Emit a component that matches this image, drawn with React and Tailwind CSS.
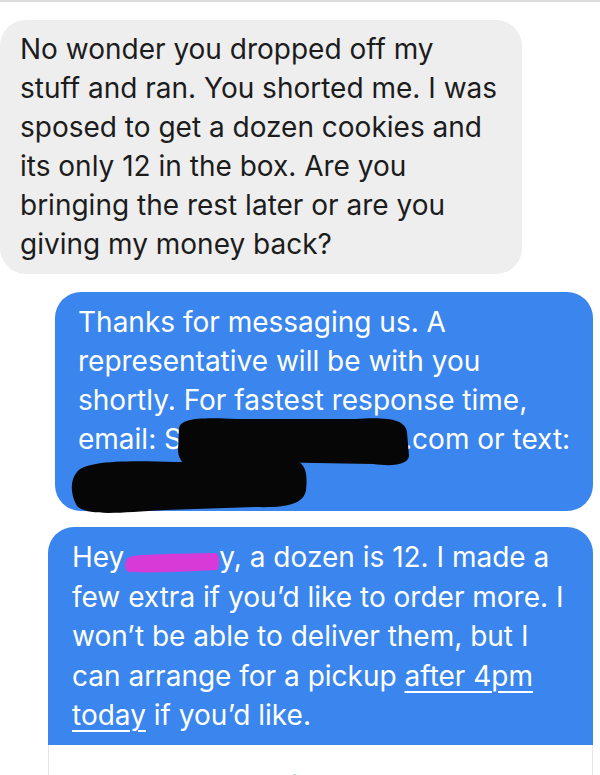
import React from "react";

const font = { fontFamily: 'Inter, "Liberation Sans", Arial, sans-serif' };

export default function App() {
  return (
    <div className="w-[600px] h-[775px] overflow-hidden bg-white" style={font}>
      <div className="h-[2px] bg-[#dcdcdc]" />
      <div className="pt-[18px] flex flex-col">
        {/* incoming gray bubble */}
        <div className="w-[522px] rounded-[26px] bg-[#eeeeee] pl-[20px] pr-[10px] py-[10px] text-[28px] leading-[39px] text-[#1c1c1c] whitespace-nowrap">
          No wonder you dropped off my<br />
          stuff and ran. You shorted me. I was<br />
          sposed to get a dozen cookies and<br />
          its only 12 in the box. Are you<br />
          bringing the rest later or are you<br />
          giving my money back?
        </div>

        {/* outgoing blue 1 */}
        <div className="relative mt-[18px] ml-[55px] w-[538px] rounded-[26px] bg-[#3a86ee] pl-[23px] pr-[10px] pt-[11px] pb-[13px] text-[28px] leading-[39px] text-white whitespace-nowrap">
          Thanks for messaging us. A<br />
          representative will be with you<br />
          shortly. For fastest response time,<br />
          email: S<span className="inline-block w-[222px]" />.com or text:<br />
          <span>&nbsp;</span>
          <svg className="absolute left-0 top-0 overflow-visible" width="538" height="224" viewBox="0 0 538 224">
            <path d="M124,136 C126,127 142,125 182,127 L300,127 C332,125 350,127 352,140 L354,164 C353,172 340,175 318,172 L205,170 L150,176 C132,177 123,170 123,158 Z" fill="#060606" />
            <path d="M22,180 C30,170 62,168 120,170 L238,168 C250,170 253,180 251,198 C249,212 232,216 200,215 L110,218 C62,221 32,224 22,214 C15,202 15,188 22,180 Z" fill="#060606" />
          </svg>
        </div>

        {/* outgoing blue 2 */}
        <div className="relative mt-[16px] ml-[48px] w-[545px] rounded-t-[26px] bg-[#3a86ee] pl-[24px] pr-[10px] pt-[11px] pb-[9px] text-[28px] leading-[39.5px] text-white whitespace-nowrap">
          Hey<span className="inline-block w-[95px]" />y, a dozen is 12. I made a<br />
          few extra if you’d like to order more. I<br />
          won’t be able to deliver them, but I<br />
          can arrange for a pickup <span className="underline decoration-2 underline-offset-[5px]">after 4pm</span><br />
          <span className="underline decoration-2 underline-offset-[5px]">today</span> if you’d like.
          <svg className="absolute left-0 top-0" width="545" height="60" viewBox="0 0 545 60">
            <path d="M80,31 C82,27 120,27 168,26 C172,27 172,41 169,43 C130,45 100,46 80,45 C76,41 76,35 80,31 Z" fill="#d83ad8" />
          </svg>
        </div>

        {/* next item, cut off */}
        <div className="ml-[48px] w-[545px] h-[60px] border-x border-[#e6e6e6] bg-white pt-[22px] pl-[70px] text-[28px] leading-[39px] text-[#9bb8e6] whitespace-nowrap">
          Schedule a pickup or order more today
        </div>
      </div>
    </div>
  );
}
